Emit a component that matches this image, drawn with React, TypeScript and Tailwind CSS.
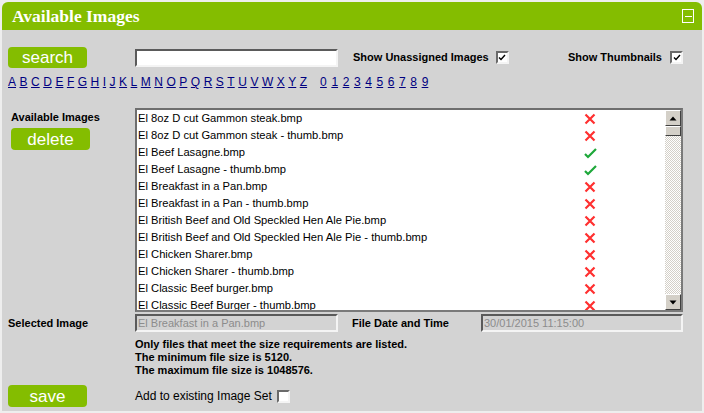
import React from 'react'

const letters = 'ABCDEFGHIJKLMNOPQRSTUVWXYZ'.split('')
const digits = '0123456789'.split('')

const files: [string, boolean][] = [
  ['El 8oz D cut Gammon steak.bmp', false],
  ['El 8oz D cut Gammon steak - thumb.bmp', false],
  ['El Beef Lasagne.bmp', true],
  ['El Beef Lasagne - thumb.bmp', true],
  ['El Breakfast in a Pan.bmp', false],
  ['El Breakfast in a Pan - thumb.bmp', false],
  ['El British Beef and Old Speckled Hen Ale Pie.bmp', false],
  ['El British Beef and Old Speckled Hen Ale Pie - thumb.bmp', false],
  ['El Chicken Sharer.bmp', false],
  ['El Chicken Sharer - thumb.bmp', false],
  ['El Classic Beef burger.bmp', false],
  ['El Classic Beef Burger - thumb.bmp', false],
]

function Cross() {
  return (
    <svg width="12" height="12" viewBox="0 0 12 12">
      <path d="M1.5 1.5 L10.5 10.5 M10.5 1.5 L1.5 10.5" stroke="#ff3030" strokeWidth="2.2" fill="none" />
    </svg>
  )
}

function Tick() {
  return (
    <svg width="13" height="12" viewBox="0 0 13 12">
      <path d="M1 7 L4 10 L12 2" stroke="#1ea83a" strokeWidth="2.2" fill="none" />
    </svg>
  )
}

function Checkbox({ checked }: { checked?: boolean }) {
  return (
    <div className="w-[13px] h-[13px] bg-white border-2 border-t-[#6a6a6a] border-l-[#6a6a6a] border-b-[#f4f4f4] border-r-[#f4f4f4] flex items-center justify-center">
      {checked && (
        <svg width="8" height="7" viewBox="0 0 8 7">
          <path d="M1 3.5 L3 5.5 L7 1" stroke="#000" strokeWidth="1.4" fill="none" />
        </svg>
      )}
    </div>
  )
}

function GreenButton({ label }: { label: string }) {
  return (
    <button className="w-full h-full bg-[#84bd00] rounded-[4px] text-white text-[17px] leading-none flex items-center justify-center">
      {label}
    </button>
  )
}

function ScrollBtn({ down }: { down?: boolean }) {
  return (
    <div className="h-[16px] bg-[#d4d0c8] border border-t-white border-l-white border-b-[#404040] border-r-[#404040] flex items-center justify-center">
      <svg width="8" height="5" viewBox="0 0 8 5">
        <path d={down ? 'M0.5 0.5 L7.5 0.5 L4 4.5 Z' : 'M0.5 4.5 L7.5 4.5 L4 0.5 Z'} fill="#000" />
      </svg>
    </div>
  )
}

export default function App() {
  return (
    <div className="w-[704px] h-[413px] bg-[#eeeeee] p-[2px] font-['Liberation_Sans',Arial,sans-serif] text-[11px] text-black">
      <div className="w-[700px] h-[409px] flex flex-col rounded-t-[6px] overflow-hidden">
        {/* Header */}
        <div className="h-[28px] bg-[#84bd00] flex items-center justify-between pl-[10px] pr-[8px]">
          <span className="font-['Liberation_Serif',serif] font-bold text-[17.5px] text-white">Available Images</span>
          <div className="w-[12px] h-[14px] border border-white flex items-center justify-center">
            <div className="w-[7px] h-px bg-white" />
          </div>
        </div>

        {/* Body */}
        <div className="flex-1 bg-[#d3d3d3] pl-[6px] pr-[19px] pt-[17px]">
          {/* Search row */}
          <div className="flex items-center h-[21px]">
            <div className="w-[127px] h-full">
              <div className="w-[79px] h-[21px]">
                <GreenButton label="search" />
              </div>
            </div>
            <input
              type="text"
              className="w-[203px] h-[18px] bg-white border-2 border-t-[#5a5a5a] border-l-[#5a5a5a] border-b-[#f4f4f4] border-r-[#f4f4f4] outline-none"
            />
            <span className="ml-[15px] font-bold">Show Unassigned Images</span>
            <div className="ml-[7px]"><Checkbox checked /></div>
            <span className="ml-auto font-bold">Show Thumbnails</span>
            <div className="ml-[8px]"><Checkbox checked /></div>
          </div>

          {/* Letter links */}
          <div className="flex items-center h-[14px] mt-[7px] text-[12px] text-[#000080]">
            <div className="flex gap-[3.5px]">
              {letters.map(l => (
                <a key={l} className="underline">{l}</a>
              ))}
            </div>
            <div className="flex gap-[4.6px] ml-[13px]">
              {digits.map(d => (
                <a key={d} className="underline">{d}</a>
              ))}
            </div>
          </div>

          {/* List */}
          <div className="flex mt-[19px]">
            <div className="w-[127px] pl-[3px] pt-[3px] flex flex-col">
              <span className="font-bold leading-[13px]">Available Images</span>
              <div className="w-[79px] h-[22px] mt-[4px]">
                <GreenButton label="delete" />
              </div>
            </div>
            <div className="flex-1 h-[204px] bg-white border-2 border-t-[#6e6e6e] border-l-[#6e6e6e] border-b-[#7a7a7a] border-r-[#7a7a7a] flex overflow-hidden">
              <div className="flex-1 pl-[1px] overflow-hidden">
                {files.map(([name, ok]) => (
                  <div key={name} className="h-[17px] flex items-center">
                    <span className="w-[446px] whitespace-nowrap text-[11.2px]">{name}</span>
                    {ok ? <Tick /> : <Cross />}
                  </div>
                ))}
              </div>
              <div className="w-[16px] flex flex-col">
                <ScrollBtn />
                <div className="h-[10px] bg-[#d4d0c8] border border-t-white border-l-white border-b-[#404040] border-r-[#404040]" />
                <div className="flex-1 bg-[repeating-conic-gradient(#d4d0c8_0_25%,#ffffff_0_50%)] bg-[length:2px_2px]" />
                <ScrollBtn down />
              </div>
            </div>
          </div>

          {/* Selected image row */}
          <div className="flex items-center mt-[2px] h-[18px]">
            <span className="w-[127px] font-bold">Selected Image</span>
            <div className="w-[203px] h-[18px] border-2 border-t-[#5a5a5a] border-l-[#5a5a5a] border-b-[#f4f4f4] border-r-[#f4f4f4] flex items-center pl-[1px] leading-none text-[#8c8c8c]">
              El Breakfast in a Pan.bmp
            </div>
            <span className="ml-[14px] w-[129px] font-bold">File Date and Time</span>
            <div className="flex-1 h-[18px] border-2 border-t-[#5a5a5a] border-l-[#5a5a5a] border-b-[#f4f4f4] border-r-[#f4f4f4] flex items-center pl-[1px] leading-none text-[#8c8c8c]">
              30/01/2015 11:15:00
            </div>
          </div>

          {/* Info */}
          <div className="ml-[127px] mt-[6px] font-bold leading-[13px]">
            <p>Only files that meet the size requirements are listed.</p>
            <p>The minimum file size is 5120.</p>
            <p>The maximum file size is 1048576.</p>
          </div>

          {/* Save row */}
          <div className="flex items-center mt-[8px] h-[22px]">
            <div className="w-[127px] h-full">
              <div className="w-[79px] h-[22px]">
                <GreenButton label="save" />
              </div>
            </div>
            <span className="text-[12px]">Add to existing Image Set</span>
            <div className="ml-[5px]"><Checkbox /></div>
          </div>
        </div>
      </div>
    </div>
  )
}
